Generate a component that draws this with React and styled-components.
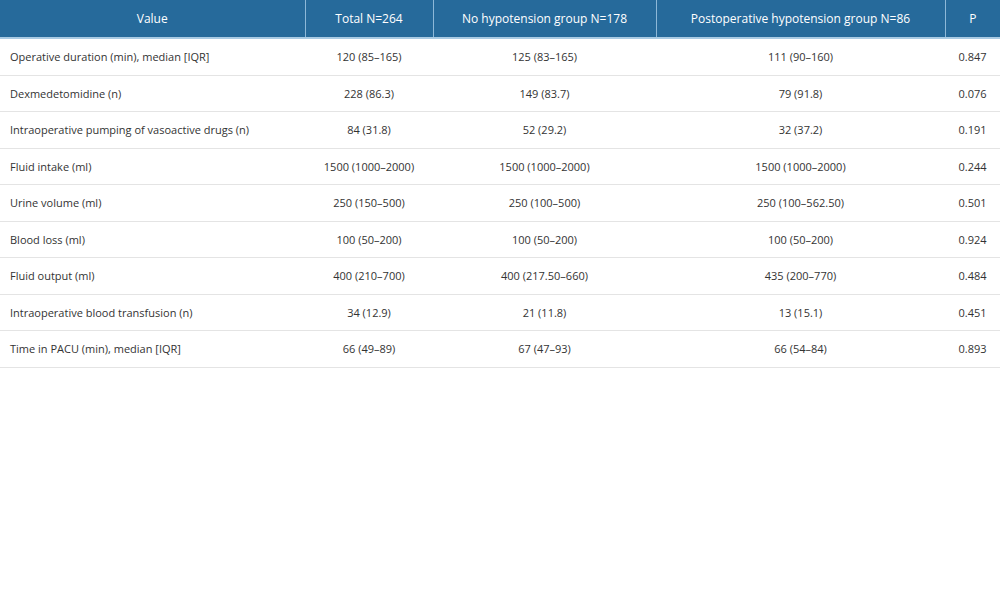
import React from "react";
import styled, { createGlobalStyle } from "styled-components";

const G = createGlobalStyle`
  body { margin: 0; background: #fff; font-family: "Open Sans", sans-serif; }
`;
const Table = styled.table`
  width: 1000px; border-collapse: collapse; table-layout: fixed; font-size: 11px;
`;
const Col = styled.col`
  width: ${p => p.$w}px;
`;
const Th = styled.th`
  background: #266a9b; color: #fff; font-weight: 400; font-size: 12px; height: 37px; padding: 0;
  border-right: 1px solid #8db8d8; border-bottom: 2px solid #a9cbe4;
  &:last-child { border-right: none; }
`;
const Td = styled.td`
  height: 35.5px; padding: 0 10px; color: #333; border-bottom: 1px solid #e4e4e4;
  text-align: ${p => (p.$left ? "left" : "center")};
`;
const widths = [305, 128, 223, 289, 55];
const heads = ["Value", "Total N=264", "No hypotension group N=178", "Postoperative hypotension group N=86", "P"];
const rows = [
  ["Operative duration (min), median [IQR]", "120 (85–165)", "125 (83–165)", "111 (90–160)", "0.847"],
  ["Dexmedetomidine (n)", "228 (86.3)", "149 (83.7)", "79 (91.8)", "0.076"],
  ["Intraoperative pumping of vasoactive drugs (n)", "84 (31.8)", "52 (29.2)", "32 (37.2)", "0.191"],
  ["Fluid intake (ml)", "1500 (1000–2000)", "1500 (1000–2000)", "1500 (1000–2000)", "0.244"],
  ["Urine volume (ml)", "250 (150–500)", "250 (100–500)", "250 (100–562.50)", "0.501"],
  ["Blood loss (ml)", "100 (50–200)", "100 (50–200)", "100 (50–200)", "0.924"],
  ["Fluid output (ml)", "400 (210–700)", "400 (217.50–660)", "435 (200–770)", "0.484"],
  ["Intraoperative blood transfusion (n)", "34 (12.9)", "21 (11.8)", "13 (15.1)", "0.451"],
  ["Time in PACU (min), median [IQR]", "66 (49–89)", "67 (47–93)", "66 (54–84)", "0.893"],
];
export default function App() {
  return (
    <>
      <G />
      <Table>
        <colgroup>{widths.map((w, i) => <Col key={i} $w={w} />)}</colgroup>
        <thead>
          <tr>{heads.map(h => <Th key={h}>{h}</Th>)}</tr>
        </thead>
        <tbody>
          {rows.map((r, i) => (
            <tr key={i}>{r.map((c, j) => <Td key={j} $left={j === 0}>{c}</Td>)}</tr>
          ))}
        </tbody>
      </Table>
    </>
  );
}
